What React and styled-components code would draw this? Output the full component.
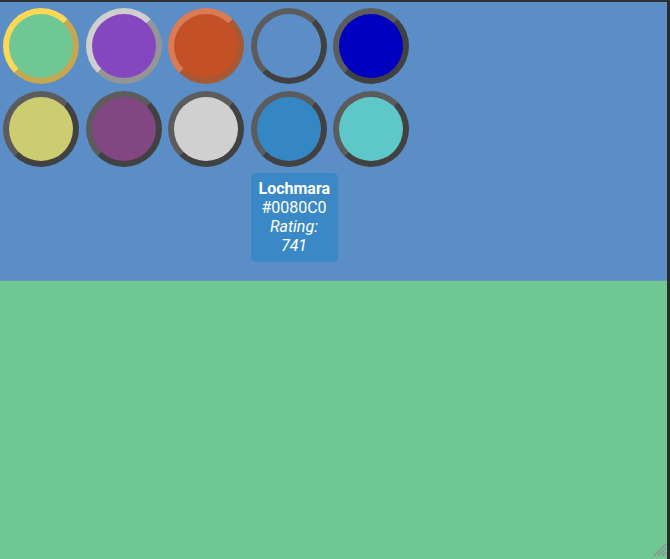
import React from "react";
import styled, { createGlobalStyle } from "styled-components";

const Global = createGlobalStyle`
  html, body { margin: 0; padding: 0; height: 100%; }
  body { font-family: Roboto, "Liberation Sans", sans-serif; background: #2e2e2e; overflow: hidden; }
  #root { height: 100%; }
`;

const Frame = styled.div`
  box-sizing: border-box;
  width: 670px;
  height: 559px;
  border-top: 2px solid #303030;
  border-right: 3px solid #2c2c2c;
  display: flex;
  flex-direction: column;
  position: relative;
`;

const TopPane = styled.div`
  flex: 0 0 278px;
  background: #5b8dc7;
  position: relative;
  border-bottom: 1px solid #6a9ab8;
`;

const BottomPane = styled.div`
  flex: 1;
  background: #6fc794;
`;

const Grid = styled.div`
  display: grid;
  grid-template-columns: repeat(5, 76px);
  grid-auto-rows: 76px;
  column-gap: 6.5px;
  row-gap: 7px;
  padding: 6px 0 0 3px;
`;

const Cell = styled.div`
  position: relative;
`;

const Swatch = styled.div`
  box-sizing: border-box;
  width: 76px;
  height: 76px;
  border-radius: 50%;
  border: 6px solid;
  border-color: ${(p) => `${p.$light} ${p.$dark} ${p.$dark} ${p.$light}`};
  background: ${(p) => p.$fill};
`;

const Tip = styled.div`
  position: absolute;
  top: 82px;
  left: 0;
  box-sizing: border-box;
  width: 87px;
  padding: 6px 8px 7px;
  border-radius: 5px;
  background: #3a89c6;
  color: #fff;
  text-align: center;
  font-size: 16px;
  line-height: 19px;
  z-index: 2;
`;

const TipName = styled.div`
  font-weight: 700;
`;

const TipRating = styled.div`
  font-style: italic;
`;

const Grip = styled.svg`
  position: absolute;
  right: 0;
  bottom: 2px;
`;

const grayL = "#5c5c5c";
const grayD = "#414141";

const swatches = [
  { fill: "#6fc794", light: "#fdd756", dark: "#c5a74f" },
  { fill: "#8547c0", light: "#cfcfcf", dark: "#959595" },
  { fill: "#c45027", light: "#da7b55", dark: "#a65932" },
  { fill: "transparent", light: grayL, dark: grayD },
  { fill: "#0000c0", light: grayL, dark: grayD },
  { fill: "#cccc70", light: grayL, dark: grayD },
  { fill: "#824682", light: grayL, dark: grayD },
  { fill: "#d0d0d0", light: grayL, dark: grayD },
  { fill: "#3587c4", light: grayL, dark: grayD, tip: true },
  { fill: "#5ec8c8", light: grayL, dark: grayD },
];

export default function App() {
  return (
    <>
      <Global />
      <Frame>
        <TopPane>
          <Grid>
            {swatches.map((s, i) => (
              <Cell key={i}>
                <Swatch $fill={s.fill} $light={s.light} $dark={s.dark} />
                {s.tip && (
                  <Tip>
                    <TipName>Lochmara</TipName>
                    <div>#0080C0</div>
                    <TipRating>Rating: 741</TipRating>
                  </Tip>
                )}
              </Cell>
            ))}
          </Grid>
        </TopPane>
        <BottomPane />
        <Grip width="16" height="16" viewBox="0 0 16 16">
          <g stroke="#8f8f8f" strokeWidth="1.3">
            <line x1="15" y1="3" x2="3" y2="15" />
            <line x1="15" y1="7" x2="7" y2="15" />
            <line x1="15" y1="11" x2="11" y2="15" />
          </g>
        </Grip>
      </Frame>
    </>
  );
}
